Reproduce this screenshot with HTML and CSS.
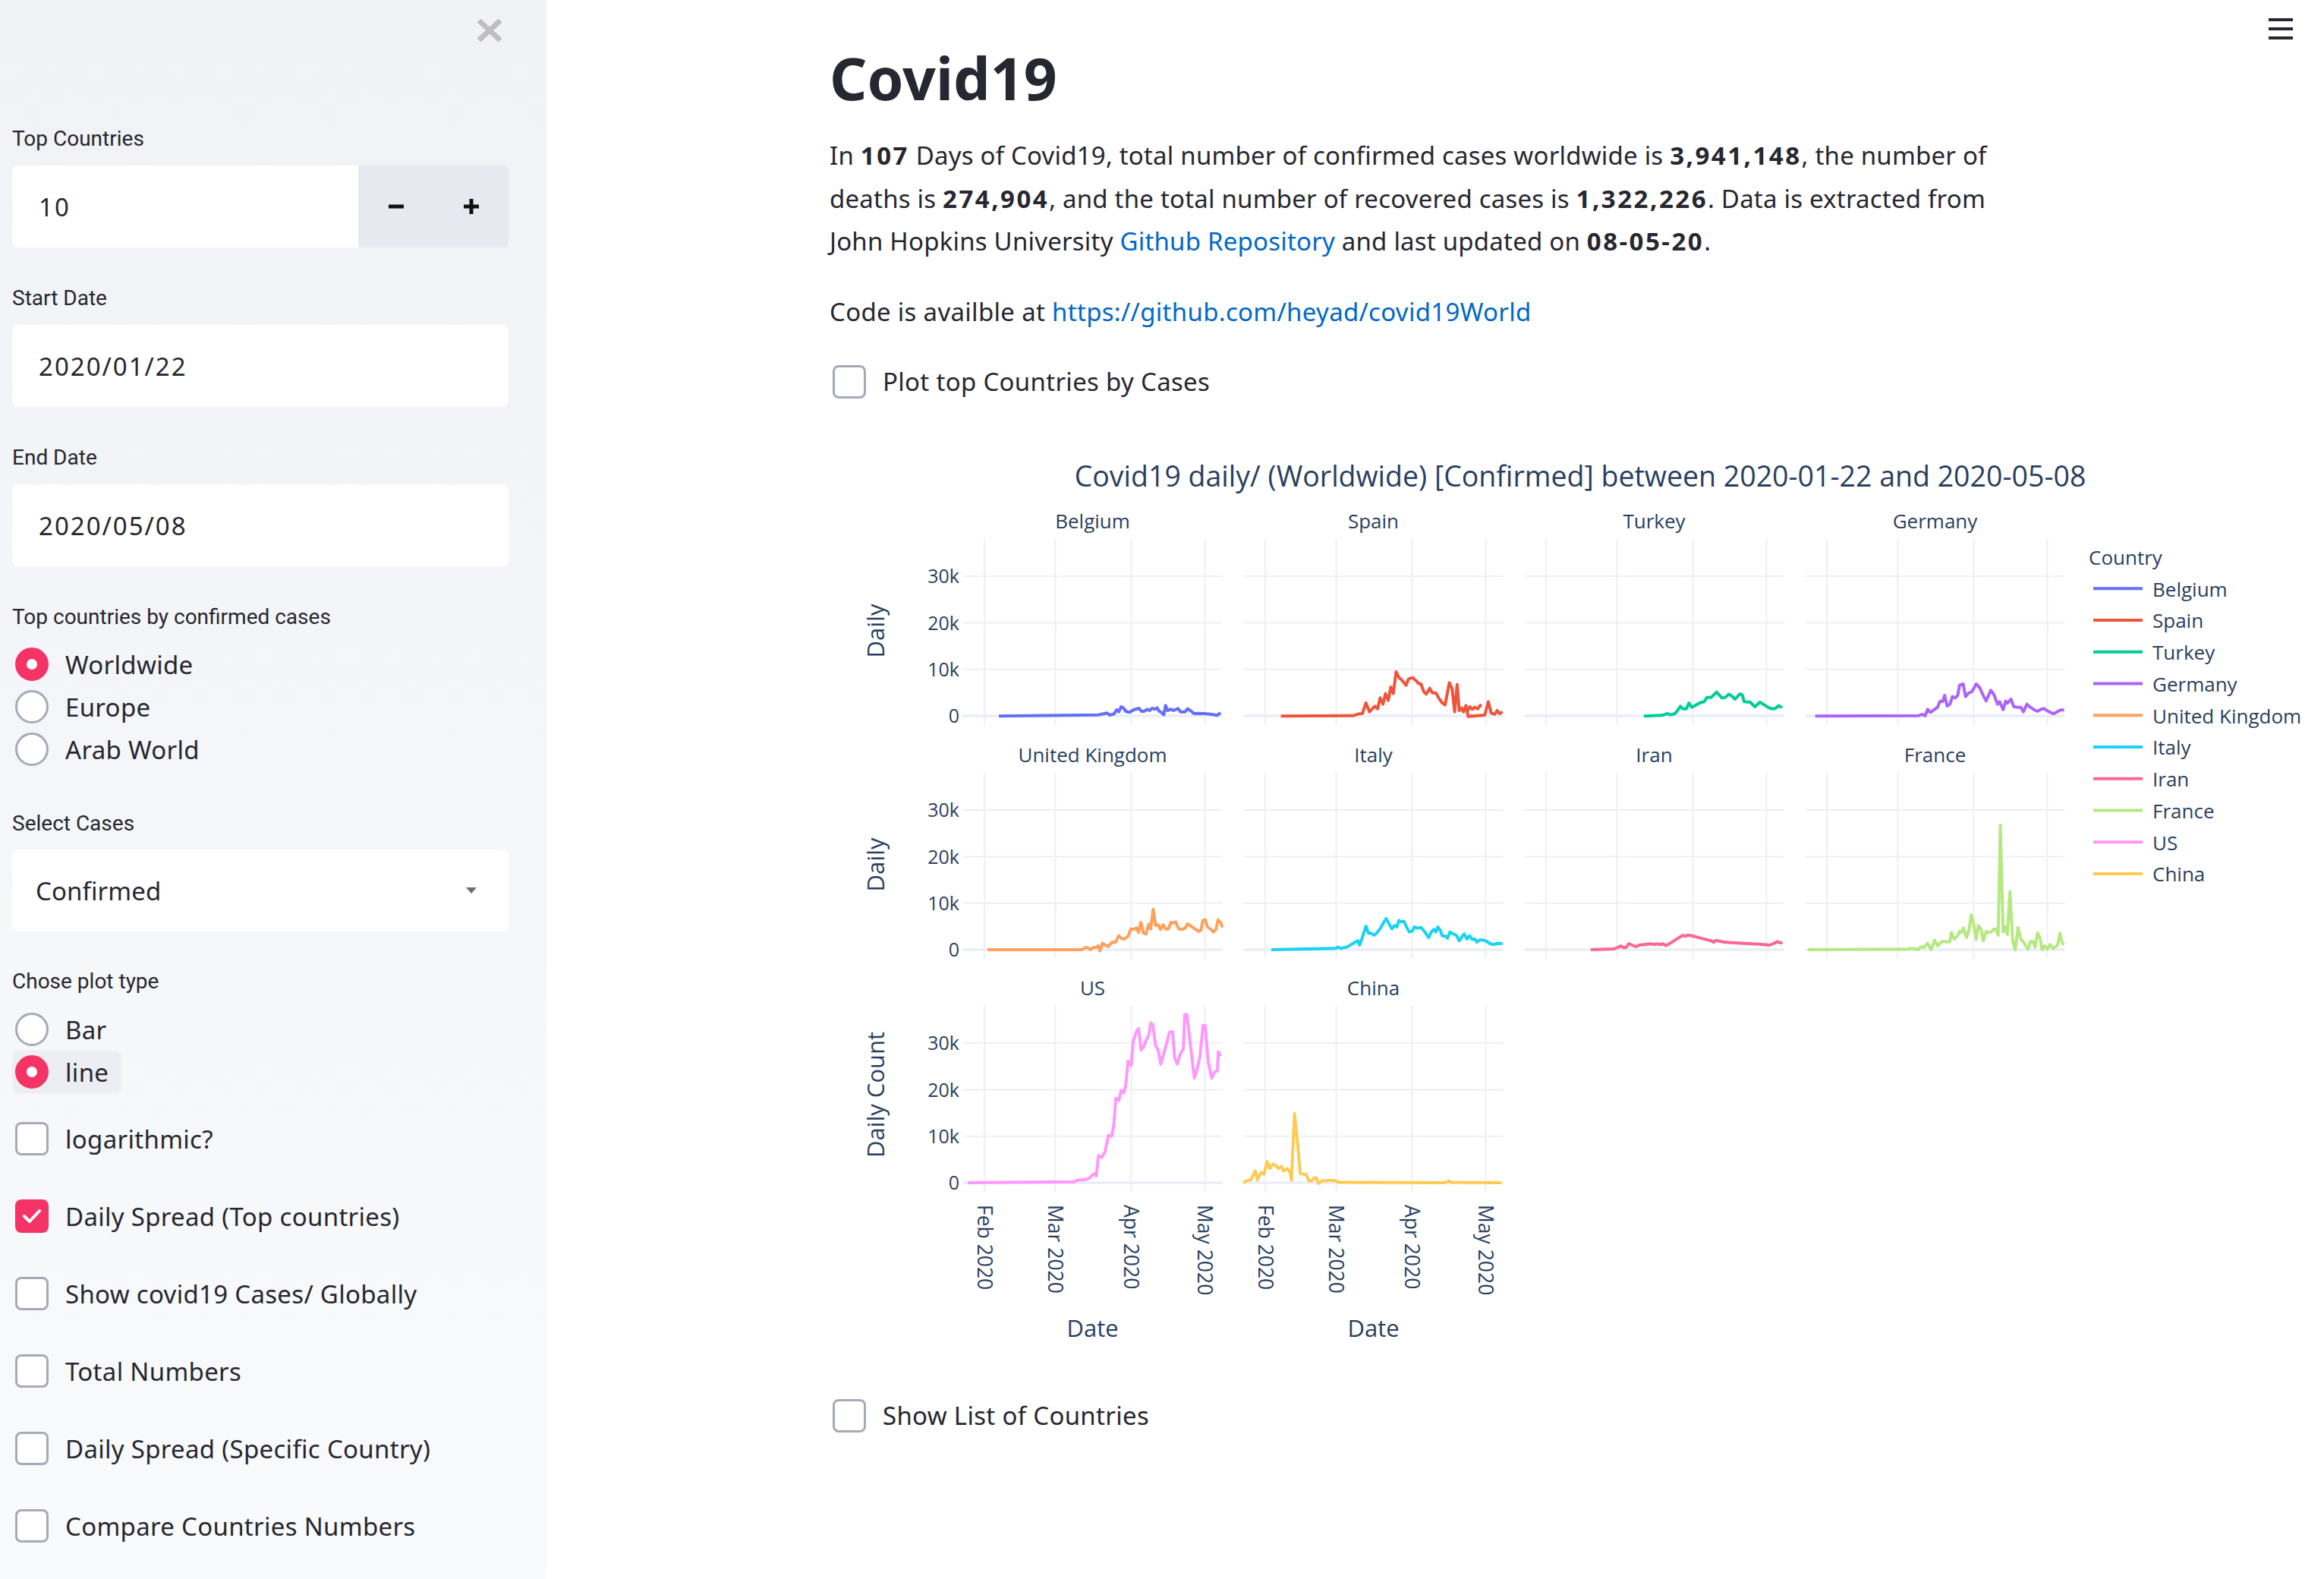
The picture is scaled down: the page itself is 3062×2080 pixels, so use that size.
FILE: index.html
```html
<!DOCTYPE html>
<html>
<head>
<meta charset="utf-8">
<title>Covid19</title>
<link rel="stylesheet" href="styles.css">
</head>
<body>
<div class="app">
  <aside class="sidebar">
    <div class="sb-head">
      <svg class="close" width="34" height="32" viewBox="0 0 34 32"><path d="M3 3 L31 29 M31 3 L3 29" stroke="#bfbfbf" stroke-width="7"/></svg>
    </div>

    <div class="widget">
      <div class="lbl">Top Countries</div>
      <div class="num">
        <div class="num-val">10</div>
        <div class="steps">
          <div class="step"><svg width="20" height="6" viewBox="0 0 20 6"><rect x="0" y="0.5" width="20" height="5" fill="#111"/></svg></div>
          <div class="step"><svg width="20" height="20" viewBox="0 0 20 20"><rect x="0" y="7.5" width="20" height="5" fill="#111"/><rect x="7.5" y="0" width="5" height="20" fill="#111"/></svg></div>
        </div>
      </div>
    </div>

    <div class="widget">
      <div class="lbl">Start Date</div>
      <div class="field">2020/01/22</div>
    </div>

    <div class="widget">
      <div class="lbl">End Date</div>
      <div class="field">2020/05/08</div>
    </div>

    <div class="widget w-radio1">
      <div class="lbl lbl-r">Top countries by confirmed cases</div>
      <div class="radios">
        <div class="radio"><span class="dot on"></span><span>Worldwide</span></div>
        <div class="radio"><span class="dot"></span><span>Europe</span></div>
        <div class="radio"><span class="dot"></span><span>Arab World</span></div>
      </div>
    </div>

    <div class="widget w-select">
      <div class="lbl lbl-r">Select Cases</div>
      <div class="field select"><span>Confirmed</span><svg class="caret" width="14" height="8" viewBox="0 0 14 8"><path d="M0 0 L14 0 L7 8 Z" fill="#6b6f7b"/></svg></div>
    </div>

    <div class="widget w-radio2">
      <div class="lbl">Chose plot type</div>
      <div class="radios">
        <div class="radio"><span class="dot"></span><span>Bar</span></div>
        <div class="radio focus"><span class="dot on"></span><span>line</span></div>
      </div>
    </div>

    <div class="cbs">
      <div class="cb"><span class="box"></span><span>logarithmic?</span></div>
      <div class="cb"><span class="box on"><svg width="26" height="20" viewBox="0 0 26 20"><path d="M3 10 L10 17 L23 3" stroke="#fff" stroke-width="4" fill="none" stroke-linecap="round" stroke-linejoin="round"/></svg></span><span>Daily Spread (Top countries)</span></div>
      <div class="cb"><span class="box"></span><span>Show covid19 Cases/ Globally</span></div>
      <div class="cb"><span class="box"></span><span>Total Numbers</span></div>
      <div class="cb"><span class="box"></span><span>Daily Spread (Specific Country)</span></div>
      <div class="cb"><span class="box"></span><span>Compare Countries Numbers</span></div>
    </div>
  </aside>

  <main class="main">
    <div class="menu"><span></span><span></span><span></span></div>
    <h1 class="title">Covid19</h1>
    <p class="intro">In <b>107</b> Days of Covid19, total number of confirmed cases worldwide is <b>3,941,148</b>, the number of<br>deaths is <b>274,904</b>, and the total number of recovered cases is <b>1,322,226</b>. Data is extracted from<br>John Hopkins University <a href="#">Github Repository</a> and last updated on <b>08-05-20</b>.</p>
    <p class="code">Code is availble at <a href="#">https://github.com/heyad/covid19World</a></p>
    <div class="cb main-cb"><span class="box"></span><span>Plot top Countries by Cases</span></div>

    <svg class="fig" width="1969" height="1220" viewBox="1093 560 1969 1220">
      <!-- grid -->
      <g stroke="#ebf0f8" stroke-width="2" fill="none">
        <path d="M1297 709V954M1390.5 709V954M1490.5 709V954M1587.5 709V954 M1667 709V954M1760.5 709V954M1860.5 709V954M1957.5 709V954 M2037 709V954M2130.5 709V954M2230.5 709V954M2327.5 709V954 M2407 709V954M2500.5 709V954M2600.5 709V954M2697.5 709V954"/>
        <path d="M1297 1017V1262M1390.5 1017V1262M1490.5 1017V1262M1587.5 1017V1262 M1667 1017V1262M1760.5 1017V1262M1860.5 1017V1262M1957.5 1017V1262 M2037 1017V1262M2130.5 1017V1262M2230.5 1017V1262M2327.5 1017V1262 M2407 1017V1262M2500.5 1017V1262M2600.5 1017V1262M2697.5 1017V1262"/>
        <path d="M1297 1323V1570M1390.5 1323V1570M1490.5 1323V1570M1587.5 1323V1570 M1667 1323V1570M1760.5 1323V1570M1860.5 1323V1570M1957.5 1323V1570"/>
        <path d="M1268.5 880.7H1610.5M1268.5 819.4H1610.5M1268.5 758.1H1610.5 M1638.5 880.7H1980.5M1638.5 819.4H1980.5M1638.5 758.1H1980.5 M2008.5 880.7H2350.5M2008.5 819.4H2350.5M2008.5 758.1H2350.5 M2378.5 880.7H2720.5M2378.5 819.4H2720.5M2378.5 758.1H2720.5"/>
        <path d="M1268.5 1188.7H1610.5M1268.5 1127.4H1610.5M1268.5 1066.1H1610.5 M1638.5 1188.7H1980.5M1638.5 1127.4H1980.5M1638.5 1066.1H1980.5 M2008.5 1188.7H2350.5M2008.5 1127.4H2350.5M2008.5 1066.1H2350.5 M2378.5 1188.7H2720.5M2378.5 1127.4H2720.5M2378.5 1066.1H2720.5"/>
        <path d="M1268.5 1495.7H1610.5M1268.5 1434.4H1610.5M1268.5 1373.1H1610.5 M1638.5 1495.7H1980.5M1638.5 1434.4H1980.5M1638.5 1373.1H1980.5"/>
      </g>
      <g stroke="#ebf0f8" stroke-width="4" fill="none">
        <path d="M1268.5 942H1610.5M1638.5 942H1980.5M2008.5 942H2350.5M2378.5 942H2720.5 M1268.5 1250H1610.5M1638.5 1250H1980.5M2008.5 1250H2350.5M2378.5 1250H2720.5 M1268.5 1557H1610.5M1638.5 1557H1980.5"/>
      </g>

      <!-- series -->
      <g class="series">
        <g transform="translate(1260 740) scale(0.4673 0.3333)">
          <polyline stroke="#636efa" points="120,607 400,602 415,598 425,595 432,603 445,598 452,582 458,590 465,570 472,576 478,588 488,592 500,582 515,576 522,588 530,588 538,580 545,585 552,576 560,580 566,574 572,588 578,592 585,602 590,565 596,585 605,580 612,585 625,577 632,590 645,590 652,578 660,585 670,597 685,596 700,597 720,600 735,604 745,594"/>
          <polyline stroke="#ef553b" points="915,607 1120,605 1135,598 1145,597 1155,555 1165,590 1175,575 1180,568 1188,578 1195,535 1203,560 1210,518 1218,545 1225,492 1232,518 1240,432 1248,455 1255,463 1268,485 1275,460 1287,455 1297,468 1303,478 1310,480 1318,510 1325,520 1335,497 1342,515 1352,515 1360,535 1370,555 1378,563 1390,475 1398,500 1405,590 1412,482 1418,585 1425,575 1430,590 1437,565 1443,608 1490,603 1500,550 1508,595 1518,600 1525,585 1532,597 1540,590"/>
          <polyline stroke="#ef553b" points="1440,590 1448,570 1455,580 1462,572 1470,578 1480,560"/>
        </g>
        <g transform="translate(2000 740) scale(0.4673 0.3333)">
          <polyline stroke="#00cc96" points="355,607 405,604 422,597 430,602 442,598 450,585 458,568 465,578 475,578 482,555 490,572 500,565 512,555 525,550 533,533 545,533 560,512 575,535 585,533 595,520 605,530 612,540 625,520 632,522 638,550 655,552 668,570 682,552 695,563 705,572 715,578 725,577 735,566 745,573"/>
          <polyline stroke="#ab63fa" points="838,607 1130,605 1140,600 1148,606 1155,580 1163,592 1175,580 1183,572 1190,548 1197,550 1203,525 1210,567 1218,560 1225,530 1233,535 1240,525 1245,485 1255,480 1262,530 1270,517 1280,510 1292,480 1302,495 1310,520 1320,547 1333,505 1342,522 1352,560 1358,550 1368,582 1375,548 1380,556 1390,540 1398,570 1410,572 1418,572 1425,590 1435,560 1445,572 1455,582 1465,588 1475,580 1482,577 1495,588 1510,598 1520,590 1530,583 1540,583"/>
        </g>
        <g transform="translate(1260 1040) scale(0.4673 0.3333)">
          <polyline stroke="#ffa15a" points="88,630 355,630 362,623 370,622 378,630 385,622 393,622 400,615 405,635 412,605 420,612 428,618 440,600 448,602 458,575 467,587 475,587 485,575 492,548 500,550 508,545 514,562 520,522 528,565 535,568 542,530 548,548 555,470 562,535 570,532 576,550 583,532 590,548 598,548 605,522 612,525 618,520 627,548 635,550 645,545 652,528 665,540 675,550 683,558 690,552 695,515 702,512 708,540 718,550 725,560 732,550 738,512 746,525 750,542"/>
          <polyline stroke="#19d3f3" points="888,630 1070,625 1075,620 1085,625 1100,620 1108,615 1115,608 1125,600 1132,595 1137,612 1145,580 1155,537 1162,565 1170,565 1178,573 1185,565 1195,547 1203,527 1212,507 1220,527 1228,548 1235,535 1242,540 1248,515 1255,520 1262,518 1270,542 1277,560 1285,557 1292,540 1300,545 1310,542 1318,555 1325,568 1332,582 1340,558 1347,550 1352,560 1358,540 1365,555 1370,575 1380,577 1385,585 1392,560 1400,567 1410,573 1418,595 1425,580 1432,568 1440,588 1447,575 1455,590 1462,588 1468,600 1475,592 1485,592 1495,597 1505,606 1515,610 1525,605 1540,606"/>
        </g>
        <g transform="translate(2000 1040) scale(0.4673 0.3333)">
          <polyline stroke="#ff6692" points="205,630 270,627 280,622 290,615 298,622 305,622 312,606 322,612 332,618 342,612 355,610 375,607 385,610 395,607 402,611 408,606 418,614 430,604 445,590 465,573 472,577 480,572 495,577 520,586 545,595 552,601 558,593 580,600 600,602 640,605 680,608 710,612 722,605 732,598 740,603 746,603"/>
          <polyline stroke="#b6e880" points="818,630 1100,628 1105,625 1120,627 1128,630 1135,620 1145,620 1155,605 1165,630 1175,592 1183,615 1195,598 1205,598 1213,600 1218,598 1222,562 1230,588 1240,575 1245,557 1250,562 1256,545 1265,582 1272,550 1278,492 1285,530 1292,590 1298,535 1305,548 1312,595 1320,558 1328,562 1335,560 1340,550 1347,548 1354,573 1360,138 1368,560 1373,540 1380,570 1387,400 1395,595 1402,630 1410,542 1418,590 1425,598 1432,615 1438,628 1445,598 1452,598 1458,620 1465,563 1472,585 1478,630 1485,615 1492,628 1500,610 1508,625 1515,620 1522,610 1528,565 1535,605 1540,610"/>
        </g>
        <g transform="translate(1100 1260) scale(0.574 0.408)">
          <polyline stroke="#ff97ff" points="305,728 550,725 555,720 575,718 585,712 590,705 596,698 600,706 605,640 612,647 620,628 628,575 635,578 640,545 645,455 652,462 657,430 663,438 668,410 673,335 680,350 685,270 692,240 697,230 703,300 710,285 715,265 720,255 725,212 730,218 736,285 742,300 748,345 755,310 762,275 768,242 775,240 780,325 786,345 792,315 800,295 803,185 808,185 815,270 825,390 830,370 838,320 845,220 850,220 857,340 865,390 872,370 878,367 880,305 885,320"/>
          <polyline stroke="#fecb52" points="937,728 945,722 955,718 965,690 970,718 978,695 985,700 992,660 998,682 1005,668 1012,672 1018,682 1025,675 1030,690 1038,682 1045,695 1048,720 1055,505 1062,600 1068,698 1075,700 1082,702 1088,722 1095,722 1100,712 1105,712 1110,730 1118,722 1125,722 1140,720 1150,722 1155,726 1200,727 1400,728 1410,722 1415,727 1530,728"/>
        </g>
      </g>

      <!-- texts -->
      <g class="ptext">
        <text class="ptitle" x="2082" y="640" text-anchor="middle">Covid19 daily/ (Worldwide) [Confirmed] between 2020-01-22 and 2020-05-08</text>

        <g class="stitle" text-anchor="middle">
          <text x="1439.5" y="695">Belgium</text>
          <text x="1809.5" y="695">Spain</text>
          <text x="2179.5" y="695">Turkey</text>
          <text x="2549.5" y="695">Germany</text>
          <text x="1439.5" y="1003">United Kingdom</text>
          <text x="1809.5" y="1003">Italy</text>
          <text x="2179.5" y="1003">Iran</text>
          <text x="2549.5" y="1003">France</text>
          <text x="1439.5" y="1310">US</text>
          <text x="1809.5" y="1310">China</text>
        </g>

        <g class="tick" text-anchor="end">
          <text x="1264" y="767">30k</text><text x="1264" y="828.5">20k</text><text x="1264" y="890">10k</text><text x="1264" y="951">0</text>
          <text x="1264" y="1075">30k</text><text x="1264" y="1136.5">20k</text><text x="1264" y="1198">10k</text><text x="1264" y="1259">0</text>
          <text x="1264" y="1382">30k</text><text x="1264" y="1443.5">20k</text><text x="1264" y="1505">10k</text><text x="1264" y="1566">0</text>
        </g>

        <g class="axt" text-anchor="middle">
          <text transform="translate(1165 830) rotate(-90)">Daily</text>
          <text transform="translate(1165 1138) rotate(-90)">Daily</text>
          <text transform="translate(1165 1441) rotate(-90)">Daily Count</text>
          <text x="1439.5" y="1760">Date</text>
          <text x="1809.5" y="1760">Date</text>
        </g>

        <g class="tick xt">
          <text transform="translate(1287.5 1586) rotate(90)">Feb 2020</text>
          <text transform="translate(1381 1586) rotate(90)">Mar 2020</text>
          <text transform="translate(1481 1586) rotate(90)">Apr 2020</text>
          <text transform="translate(1578 1586) rotate(90)">May 2020</text>
          <text transform="translate(1657.5 1586) rotate(90)">Feb 2020</text>
          <text transform="translate(1751 1586) rotate(90)">Mar 2020</text>
          <text transform="translate(1851 1586) rotate(90)">Apr 2020</text>
          <text transform="translate(1948 1586) rotate(90)">May 2020</text>
        </g>

        <g class="legend">
          <text x="2752" y="743">Country</text>
          <g stroke-width="4">
            <path d="M2758 774.2H2823" stroke="#636efa"/>
            <path d="M2758 815.9H2823" stroke="#ef553b"/>
            <path d="M2758 857.7H2823" stroke="#00cc96"/>
            <path d="M2758 899.4H2823" stroke="#ab63fa"/>
            <path d="M2758 941.2H2823" stroke="#ffa15a"/>
            <path d="M2758 983H2823" stroke="#19d3f3"/>
            <path d="M2758 1024.7H2823" stroke="#ff6692"/>
            <path d="M2758 1066.5H2823" stroke="#b6e880"/>
            <path d="M2758 1108.2H2823" stroke="#ff97ff"/>
            <path d="M2758 1150H2823" stroke="#fecb52"/>
          </g>
          <text x="2836" y="784.5">Belgium</text>
          <text x="2836" y="826.2">Spain</text>
          <text x="2836" y="868">Turkey</text>
          <text x="2836" y="909.7">Germany</text>
          <text x="2836" y="951.5">United Kingdom</text>
          <text x="2836" y="993.2">Italy</text>
          <text x="2836" y="1035">Iran</text>
          <text x="2836" y="1076.7">France</text>
          <text x="2836" y="1118.5">US</text>
          <text x="2836" y="1160.2">China</text>
        </g>
      </g>
    </svg>

    <div class="cb main-cb2"><span class="box"></span><span>Show List of Countries</span></div>
  </main>
</div>
</body>
</html>
```

FILE: styles.css
```css
html, body {
  margin: 0;
  padding: 0;
}
body {
  font-family: "Noto Sans", "Open Sans", "Liberation Sans", sans-serif;
  color: #262730;
  background: #ffffff;
}
.app {
  display: flex;
  width: 3062px;
  min-height: 2080px;
}

/* ---------- sidebar ---------- */
.sidebar {
  flex: none;
  width: 720px;
  box-sizing: border-box;
  padding: 0 50px 0 16px;
  background: linear-gradient(180deg, #f0f2f6 0%, #f9fafb 100%);
}
.sb-head {
  height: 160px;
  box-sizing: border-box;
  padding-top: 24px;
  padding-right: 8px;
  display: flex;
  justify-content: flex-end;
  align-items: flex-start;
}
.widget {
  margin-bottom: 44px;
}
.lbl {
  font-family: Roboto, "Noto Sans", sans-serif;
  font-size: 28px;
  line-height: 40px;
  height: 40px;
  padding-top: 3px;
  margin-bottom: 15px;
  white-space: nowrap;
}
.lbl-r {
  margin-bottom: 14px;
}
.w-radio1 { margin-bottom: 47px; }
.w-select { margin-bottom: 43px; }
.w-radio2 { margin-bottom: 32px; }

.num {
  display: flex;
  height: 108px;
  border-radius: 8px;
  overflow: hidden;
}
.num-val {
  flex: 1;
  background: #ffffff;
  display: flex;
  align-items: center;
  padding-left: 35px;
  font-size: 33px;
  letter-spacing: 2px;
}
.steps {
  width: 198px;
  display: flex;
  background: #e6e9ef;
}
.step {
  flex: 1;
  display: flex;
  align-items: center;
  justify-content: center;
}
.field {
  height: 108px;
  box-sizing: border-box;
  background: #ffffff;
  border-radius: 8px;
  display: flex;
  align-items: center;
  padding-left: 35px;
  font-size: 33px;
  letter-spacing: 2px;
}
.select {
  padding-left: 31px;
  padding-right: 42px;
  justify-content: space-between;
  letter-spacing: 0.1px;
}
.radios {
  display: flex;
  flex-direction: column;
  align-items: flex-start;
}
.radio {
  height: 56px;
  display: inline-flex;
  align-items: center;
  gap: 22px;
  padding: 0 17px 0 4px;
  font-size: 33px;
  letter-spacing: 0.3px;
  border-radius: 8px;
}
.radio.focus {
  background: #eceef3;
}
.dot {
  width: 44px;
  height: 44px;
  box-sizing: border-box;
  border-radius: 50%;
  border: 3px solid #a6aab6;
  background: #ffffff;
  flex: none;
}
.dot.on {
  border: 15px solid #f63366;
  background: #ffffff;
}
.cbs {
  display: flex;
  flex-direction: column;
  gap: 46px;
}
.cb {
  height: 56px;
  display: flex;
  align-items: center;
  gap: 22px;
  padding-left: 4px;
  font-size: 33px;
  letter-spacing: 0.3px;
  white-space: nowrap;
}
.box {
  width: 44px;
  height: 44px;
  box-sizing: border-box;
  border: 3px solid #a6aab6;
  border-radius: 8px;
  background: #ffffff;
  flex: none;
  display: flex;
  align-items: center;
  justify-content: center;
}
.box.on {
  background: #f63366;
  border-color: #f63366;
}

/* ---------- main ---------- */
.main {
  flex: 1;
  position: relative;
  padding-left: 373px;
  min-width: 0;
}
.menu {
  position: absolute;
  top: 24px;
  right: 41px;
  width: 32px;
  display: flex;
  flex-direction: column;
  gap: 8px;
}
.menu span {
  display: block;
  height: 4px;
  background: #262730;
}
.title {
  margin: 0;
  padding-top: 53px;
  height: 100px;
  font-size: 77px;
  line-height: 100px;
  font-weight: 700;
}
.intro {
  margin: 24px 0 0;
  font-size: 33px;
  letter-spacing: 0.2px;
  line-height: 56.5px;
  white-space: nowrap;
}
.code {
  margin: 36px 0 0;
  font-size: 33px;
  letter-spacing: 0.3px;
  line-height: 56.5px;
  white-space: nowrap;
}
a {
  color: #0068c9;
  text-decoration: none;
}
b {
  font-weight: 700;
  letter-spacing: 2.5px;
}
.main-cb {
  margin-top: 35.5px;
}
.fig {
  display: block;
  margin-top: 30px;
}
.main-cb2 {
  margin-top: 56px;
}

/* ---------- plot ---------- */
.series polyline {
  fill: none;
  stroke-width: 4;
  stroke-linejoin: round;
  vector-effect: non-scaling-stroke;
}
.ptext text {
  font-family: "Open Sans", "Noto Sans", sans-serif;
  fill: #2a3f5f;
}
.ptitle {
  font-size: 37.5px;
}
.stitle text {
  font-size: 26px;
}
.tick text {
  font-size: 25px;
}
.xt text {
  font-size: 26.5px;
}
.axt text {
  font-size: 31px;
}
.legend text {
  font-size: 26px;
}
.legend path {
  fill: none;
}
```
